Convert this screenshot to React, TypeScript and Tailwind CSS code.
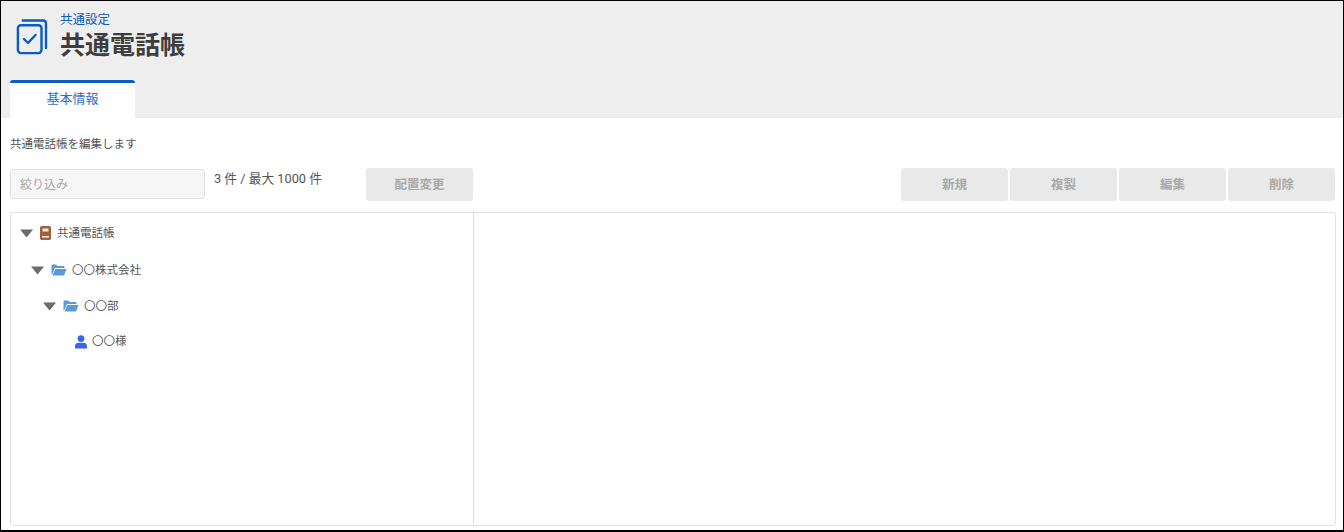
const FONT = "font-['Roboto','Noto_Sans_CJK_JP','Noto_Sans',sans-serif]";

function Caret() {
  return (
    <svg width="13" height="9" viewBox="0 0 13 9" className="shrink-0">
      <path d="M0 0.5H13L6.5 8.5Z" fill="#6b6b6b" />
    </svg>
  );
}

function Folder() {
  return (
    <svg width="16" height="12" viewBox="0 0 16 12" className="shrink-0">
      <path d="M0.5 1.5Q0.5 0.5 1.5 0.5H5L6.5 2H12.5Q13.5 2 13.5 3V4H4L1 10.5H0.5Z" fill="#5b9bd5" />
      <path d="M4.3 5H15.6L13 11.5H1.4Z" fill="#5b9bd5" />
    </svg>
  );
}

function Book() {
  return (
    <svg width="11" height="14" viewBox="0 0 11 14" className="shrink-0">
      <rect x="0" y="0" width="11" height="14" rx="1.8" fill="#a0603a" />
      <rect x="2.5" y="2.5" width="6" height="3" fill="#f5e9df" />
      <rect x="2" y="10" width="7" height="1.6" fill="#f5e9df" />
    </svg>
  );
}

function Person() {
  return (
    <svg width="12" height="14" viewBox="0 0 12 14" className="shrink-0">
      <circle cx="6" cy="3.6" r="3.4" fill="#3a66e8" />
      <path d="M0 13.6V11.4Q0 7.8 3.5 7.8H8.5Q12 7.8 12 11.4V13.6Z" fill="#3a66e8" />
    </svg>
  );
}

function ActionButton({ label }: { label: string }) {
  return (
    <button className="h-[33px] w-[107px] rounded-[3px] bg-[#e9e9e9] pt-[2px] text-[12.5px] font-bold text-[#a9a9a9]">
      {label}
    </button>
  );
}

export default function App() {
  return (
    <div className={`${FONT} h-[532px] w-[1344px] overflow-hidden border border-b-2 border-black bg-white text-[#444444]`}>
      <header className="flex h-[117px] flex-col bg-[#eeeeee]">
        <div className="flex items-start pl-[14px] pt-[11px]">
          <svg width="34" height="38" viewBox="0 0 34 38" fill="none" className="mt-[6px] shrink-0" stroke="#0b5cc0" strokeWidth="2.4">
            <rect x="2.9" y="7.2" width="23.6" height="27.9" rx="3" />
            <path d="M7.7 2.5H28Q31 2.5 31 5.5V30" strokeLinecap="round" />
            <path d="M9 21L13 25L20.5 17" strokeWidth="2.4" strokeLinecap="round" strokeLinejoin="round" />
          </svg>
          <div className="ml-[11px] flex flex-col">
            <div className="text-[12.5px] leading-[16px] text-[#0b5cc0]">共通設定</div>
            <div className="mt-[1px] text-[25px] font-bold leading-[34px] text-[#3e3e3e]">共通電話帳</div>
          </div>
        </div>
        <div className="mt-auto pl-[9px]">
          <div className="flex h-[38px] w-[125px] items-center justify-center rounded-t-[3px] border-t-[3px] border-[#0b5cc0] bg-white pb-[4px] text-[13px] text-[#2f6fc4]">
            基本情報
          </div>
        </div>
      </header>

      <main className="pl-[9px] pr-[8px]">
        <p className="pt-[18px] text-[11.5px] leading-[16px] text-[#555555]">共通電話帳を編集します</p>

        <div className="mt-[16px] flex items-start">
          <div className="mt-[1px] flex h-[30px] w-[195px] items-center rounded-[3px] border border-[#e2e2e2] bg-[#f6f6f6] pl-[9px] pt-[2px] text-[12px] text-[#a6a6a6]">
            絞り込み
          </div>
          <span className="ml-[9px] mt-[3px] text-[12.75px] leading-[16px] text-[#555555]">3 件 / 最大 1000 件</span>
          <div className="ml-[44px]">
            <ActionButton label="配置変更" />
          </div>
          <div className="ml-auto flex gap-[2px]">
            <ActionButton label="新規" />
            <ActionButton label="複製" />
            <ActionButton label="編集" />
            <ActionButton label="削除" />
          </div>
        </div>

        <div className="mt-[11px] flex h-[314px] w-[1326px] rounded-[3px] border border-[#e2e2e2] text-[11.5px] text-[#555555]">
          <div className="w-[463px] shrink-0 border-r border-[#e2e2e2]">
            <div className="mt-[10px] flex h-[20px] items-center pl-[9px]">
              <Caret />
              <span className="ml-[7px]"><Book /></span>
              <span className="ml-[6px] pt-[2px]">共通電話帳</span>
            </div>
            <div className="mt-[17px] flex h-[20px] items-center pl-[20px]">
              <Caret />
              <span className="ml-[7px]"><Folder /></span>
              <span className="ml-[5px] pt-[2px]">〇〇株式会社</span>
            </div>
            <div className="mt-[16px] flex h-[20px] items-center pl-[32px]">
              <Caret />
              <span className="ml-[7px]"><Folder /></span>
              <span className="ml-[5px] pt-[2px]">〇〇部</span>
            </div>
            <div className="mt-[16px] flex h-[20px] items-center pl-[64px]">
              <Person />
              <span className="ml-[5px]">〇〇様</span>
            </div>
          </div>
          <div className="flex-1" />
        </div>
      </main>
    </div>
  );
}
